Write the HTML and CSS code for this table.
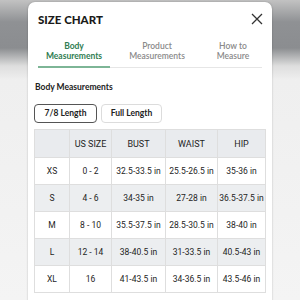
FILE: index.html
```html
<!DOCTYPE html>
<html>
<head>
<meta charset="utf-8">
<link rel="stylesheet" href="styles.css">
</head>
<body>
<div class="modal">
  <div class="head">
    <h1 class="title">SIZE CHART</h1>
    <svg class="close" width="12" height="12" viewBox="0 0 12 12"><path d="M1 1L11 11M11 1L1 11" stroke="#333" stroke-width="1.3" fill="none"/></svg>
  </div>
  <div class="tabs">
    <div class="tab tab-active">Body<br>Measurements</div>
    <div class="tab tab-2">Product<br>Measurements</div>
    <div class="tab tab-3">How to<br>Measure</div>
  </div>
  <div class="content">
    <div class="label">Body Measurements</div>
    <div class="btns">
      <div class="btn btn-active">7/8 Length</div>
      <div class="btn">Full Length</div>
    </div>
    <table class="chart">
      <tr class="hdr"><td></td><td>US SIZE</td><td>BUST</td><td>WAIST</td><td>HIP</td></tr>
      <tr><td>XS</td><td>0 - 2</td><td>32.5-33.5 in</td><td>25.5-26.5 in</td><td>35-36 in</td></tr>
      <tr class="alt"><td>S</td><td>4 - 6</td><td>34-35 in</td><td>27-28 in</td><td>36.5-37.5 in</td></tr>
      <tr><td>M</td><td>8 - 10</td><td>35.5-37.5 in</td><td>28.5-30.5 in</td><td>38-40 in</td></tr>
      <tr class="alt"><td>L</td><td>12 - 14</td><td>38-40.5 in</td><td>31-33.5 in</td><td>40.5-43 in</td></tr>
      <tr><td>XL</td><td>16</td><td>41-43.5 in</td><td>34-36.5 in</td><td>43.5-46 in</td></tr>
    </table>
  </div>
</div>
</body>
</html>
```
FILE: styles.css
```css
html, body {
  margin: 0;
  padding: 0;
  height: 300px;
  overflow: hidden;
}
body {
  background: linear-gradient(to bottom, #c2c2c2 0px, #8f9194 22px, #8b8d90 48px, #dedede 66px, #efefef 80px, #f4f4f4 300px);
  font-family: Lato, "Noto Sans", sans-serif;
  color: #1e1e1e;
}
.modal {
  width: 244px;
  height: 310px;
  margin: 2px auto 0;
  background: #fff;
  border-radius: 7px 7px 0 0;
  box-shadow: 0 0 2px rgba(0,0,0,0.25);
}
.head {
  display: flex;
  justify-content: space-between;
  align-items: center;
  padding: 9px 9px 0 10px;
  height: 16px;
}
.title {
  margin: 0;
  font-size: 11.5px;
  font-weight: 900;
  letter-spacing: 0;
  color: #1a1a1a;
}
.close {
  display: block;
}
.tabs {
  display: flex;
  margin: 15px 10px 0 10px;
  border-bottom: 1px solid #e6e6e6;
}
.tab {
  text-align: center;
  font-size: 8.5px;
  line-height: 9.5px;
  font-weight: 600;
  color: #8a8a8a;
  padding: 0 0 5px;
  white-space: nowrap;
}
.tab-active {
  width: 72px;
  color: #2f7d52;
  font-weight: 700;
  border-bottom: 2px solid #7db596;
  margin-bottom: -1px;
}
.tab-2 { width: 94px; }
.tab-3 { width: 58px; }
.content {
  padding: 0 6px 0 6px;
}
.label {
  margin-top: 14px;
  font-size: 8.5px;
  font-weight: 700;
  color: #222;
  height: 10px;
  padding-left: 1px;
}
.btns {
  display: flex;
  gap: 4px;
  margin-top: 12px;
}
.btn {
  height: 17px;
  border: 1px solid #dcdcdc;
  border-radius: 4px;
  font-size: 8.5px;
  font-weight: 700;
  line-height: 17px;
  color: #222;
  text-align: center;
  width: 59px;
  white-space: nowrap;
}
.btn-active {
  border-color: #555;
  width: 61px;
}
.chart {
  margin-top: 6px;
  border-collapse: collapse;
  border: 1px solid #bdbdbd;
  font-family: Roboto, "Liberation Sans", sans-serif;
  font-size: 8.5px;
  color: #1e1e1e;
  table-layout: fixed;
  width: 232px;
}
.chart td {
  border: 1px solid #dedede;
  text-align: center;
  height: 26px;
  padding: 0;
}
.chart td:nth-child(1) { width: 34px; }
.chart td:nth-child(2) { width: 41px; }
.chart td:nth-child(3) { width: 53px; }
.chart td:nth-child(4) { width: 51px; }
.hdr td {
  background: #e9ebee;
  height: 27px;
  font-size: 9px;
}
.alt td {
  background: #eceef0;
}
```
